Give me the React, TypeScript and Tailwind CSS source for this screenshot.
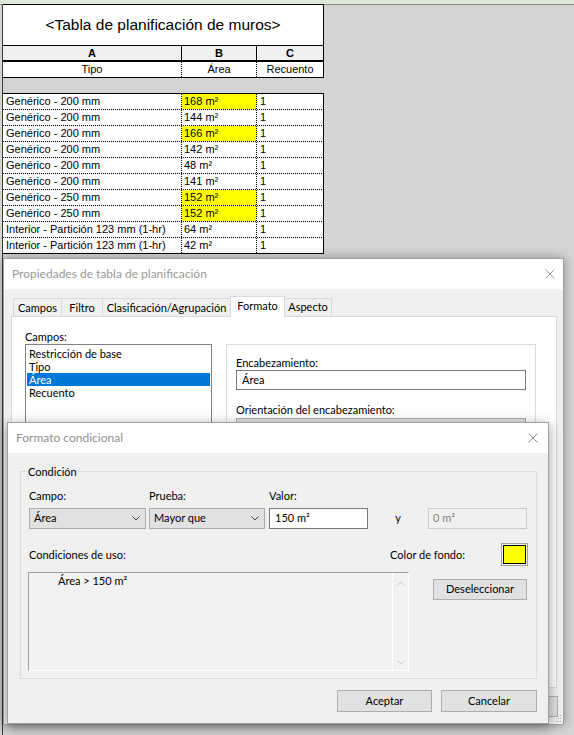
import React from "react";

const rows = [
  { tipo: "Genérico - 200 mm", area: "168 m²", hi: true },
  { tipo: "Genérico - 200 mm", area: "144 m²", hi: false },
  { tipo: "Genérico - 200 mm", area: "166 m²", hi: true },
  { tipo: "Genérico - 200 mm", area: "142 m²", hi: false },
  { tipo: "Genérico - 200 mm", area: "48 m²", hi: false },
  { tipo: "Genérico - 200 mm", area: "141 m²", hi: false },
  { tipo: "Genérico - 250 mm", area: "152 m²", hi: true },
  { tipo: "Genérico - 250 mm", area: "152 m²", hi: true },
  { tipo: "Interior - Partición 123 mm (1-hr)", area: "64 m²", hi: false },
  { tipo: "Interior - Partición 123 mm (1-hr)", area: "42 m²", hi: false },
];

function CloseX({ color }: { color: string }) {
  return (
    <svg width="10" height="10" viewBox="0 0 10 10" className="shrink-0">
      <path d="M0.5 0.5L9.5 9.5M9.5 0.5L0.5 9.5" stroke={color} strokeWidth="1" fill="none" />
    </svg>
  );
}

function Chevron({ color = "#404040", up = false }: { color?: string; up?: boolean }) {
  return (
    <svg width="8" height="5" viewBox="0 0 8 5" className="shrink-0">
      <path d={up ? "M0.5 4.5L4 1L7.5 4.5" : "M0.5 0.5L4 4L7.5 0.5"} stroke={color} strokeWidth="1" fill="none" />
    </svg>
  );
}

function Grip() {
  return (
    <svg width="7" height="10" viewBox="0 0 7 10">
      <rect x="5" y="2" width="1" height="1" fill="#a0a0a0" />
      <rect x="3" y="5" width="1" height="1" fill="#a0a0a0" />
      <rect x="5" y="5" width="1" height="1" fill="#a0a0a0" />
      <rect x="1" y="8" width="1" height="1" fill="#a0a0a0" />
      <rect x="3" y="8" width="1" height="1" fill="#a0a0a0" />
      <rect x="5" y="8" width="1" height="1" fill="#a0a0a0" />
    </svg>
  );
}

function ScheduleTable() {
  return (
    <div className="-mt-px flex w-[321px] flex-col font-['Liberation_Sans',Arial,sans-serif] text-[11px] text-black">
      <div className="flex h-[42px] items-center justify-center border-t border-r border-b border-black bg-white text-[15.5px]">
        &lt;Tabla de planificación de muros&gt;
      </div>
      <div className="flex h-[16px] border-b-2 border-black bg-[#f0f0f0] font-bold leading-[14px]">
        <div className="w-[179px] border-r border-black text-center">A</div>
        <div className="w-[75px] border-r border-black text-center">B</div>
        <div className="w-[67px] border-r border-black text-center">C</div>
      </div>
      <div className="flex h-[16px] border-b border-black bg-white leading-[15px]">
        <div className="w-[179px] border-r border-dotted border-black text-center">Tipo</div>
        <div className="w-[75px] border-r border-dotted border-black text-center">Área</div>
        <div className="w-[67px] border-r border-black text-center">Recuento</div>
      </div>
      <div className="h-[15px]" />
      <div className="flex flex-col border-t border-black bg-white leading-[15px]">
        {rows.map((r, i) => (
          <div
            key={i}
            className={`flex h-[16px] border-b border-black ${i === rows.length - 1 ? "" : "border-dotted"}`}
          >
            <div className="w-[179px] border-r border-dotted border-black pl-[3px] whitespace-nowrap">{r.tipo}</div>
            <div
              className={`w-[75px] border-r border-dotted border-black pl-[2px] ${r.hi ? "bg-[#ffff00]" : ""}`}
            >
              {r.area}
            </div>
            <div className="w-[67px] border-r border-black pl-[3px]">1</div>
          </div>
        ))}
      </div>
    </div>
  );
}

function PropertiesDialog() {
  const tabs = [
    { label: "Campos", w: "w-[48px]" },
    { label: "Filtro", w: "w-[41px]" },
    { label: "Clasificación/Agrupación", w: "w-[128px]" },
  ];
  return (
    <div className="absolute left-[3px] top-[258px] flex h-[467px] w-[561px] flex-col border border-[#a0a0a0] bg-[#f0f0f0] font-['Lato',sans-serif] text-[11px] text-black shadow-[0_0_10px_rgba(0,0,0,0.35)]">
      <div className="flex h-[30px] shrink-0 items-center bg-white pl-[8px] pr-[8px] text-[12px] text-[#999]">
        <span className="flex-1">Propiedades de tabla de planificación</span>
        <CloseX color="#9a9a9a" />
      </div>
      <div className="flex flex-1 flex-col pl-[7px] pr-[6px] pt-[7px]">
        <div className="flex h-[20px] items-end pl-[2px]">
          {tabs.map((t) => (
            <div
              key={t.label}
              className={`${t.w} flex h-[18px] items-center justify-center border-t border-l border-[#d9d9d9] bg-[#f0f0f0] leading-[15px]`}
            >
              {t.label}
            </div>
          ))}
          <div className="relative z-10 -mb-px flex h-[21px] w-[55px] items-center justify-center border-t border-l border-r border-[#d9d9d9] bg-white pb-[2px]">
            Formato
          </div>
          <div className="flex h-[18px] w-[47px] items-center justify-center border-t border-r border-[#d9d9d9] bg-[#f0f0f0]">
            Aspecto
          </div>
        </div>
        <div className="h-[372px] border border-[#d9d9d9] bg-white">
          <div className="flex pl-[13px] pt-[12px]">
            <div className="flex w-[187px] flex-col">
              <span className="leading-[15px]">Campos:</span>
              <div className="flex h-[260px] flex-col border border-[#828282] bg-white px-px pt-[2px] leading-[13px]">
                <div className="pl-[2px]">Restricción de base</div>
                <div className="pl-[2px]">Tipo</div>
                <div className="bg-[#0078d7] pl-[2px] text-white">Área</div>
                <div className="pl-[2px]">Recuento</div>
              </div>
            </div>
            <div className="ml-[14px] mt-[15px] flex h-[330px] w-[310px] flex-col border border-[#dcdcdc] px-[9px] pt-[10px]">
              <span className="leading-[15px]">Encabezamiento:</span>
              <div className="flex h-[20px] items-center border border-[#7a7a7a] bg-white pl-[5px]">Área</div>
              <span className="mt-[12px] leading-[15px]">Orientación del encabezamiento:</span>
              <div className="mt-px h-[21px] border border-[#adadad] bg-[#e1e1e1]" />
            </div>
          </div>
        </div>
        <div className="mt-[8px] flex justify-end gap-[9px]">
          <div className="flex h-[21px] w-[75px] items-center justify-center border border-[#adadad] bg-[#e1e1e1]">Aceptar</div>
          <div className="flex h-[21px] w-[75px] items-center justify-center border border-[#adadad] bg-[#e1e1e1]">Cancelar</div>
          <div className="-mr-px flex h-[21px] w-[75px] items-center justify-center border border-[#adadad] bg-[#e1e1e1]">Ayuda</div>
        </div>
      </div>
      <div className="absolute bottom-[1px] right-[1px]">
        <Grip />
      </div>
    </div>
  );
}

function Select({ value, w }: { value: string; w: string }) {
  return (
    <div className={`${w} flex h-[21px] items-center justify-between border border-[#adadad] bg-[#e1e1e1] pl-[4px] pr-[5px]`}>
      <span>{value}</span>
      <Chevron />
    </div>
  );
}

function ConditionalDialog() {
  return (
    <div className="absolute left-[7px] top-[422px] flex h-[302px] w-[542px] flex-col border border-[#a0a0a0] bg-[#f0f0f0] font-['Lato',sans-serif] text-[11px] text-black shadow-[0_3px_12px_rgba(0,0,0,0.4)]">
      <div className="flex h-[30px] shrink-0 items-center bg-white pl-[8px] pr-[10px] text-[12px] text-[#8f8f8f]">
        <span className="flex-1">Formato condicional</span>
        <CloseX color="#8a8a8a" />
      </div>
      <div className="flex flex-1 flex-col pl-[12px] pr-[11px] pt-[18px]">
        <div className="relative h-[208px] border border-[#dcdcdc] pb-[7px] pl-[8px] pr-[9px] pt-[16px]">
          <span className="absolute -top-[8px] left-[6px] bg-[#f0f0f0] px-px leading-[15px]">Condición</span>
          <div className="flex items-end">
            <div className="flex w-[117px] flex-col gap-[5px]">
              <span className="leading-[15px]">Campo:</span>
              <Select value="Área" w="w-[117px]" />
            </div>
            <div className="ml-[3px] flex w-[116px] flex-col gap-[5px]">
              <span className="leading-[15px]">Prueba:</span>
              <Select value="Mayor que" w="w-[116px]" />
            </div>
            <div className="ml-[4px] flex w-[99px] flex-col gap-[5px]">
              <span className="leading-[15px]">Valor:</span>
              <div className="flex h-[21px] items-center border border-[#7a7a7a] bg-white pl-[5px]">150 m²</div>
            </div>
            <div className="flex h-[21px] w-[60px] items-center justify-center">y</div>
            <div className="flex h-[21px] w-[99px] items-center border border-[#cccccc] bg-[#f0f0f0] pl-[4px] text-[#838383]">
              0 m²
            </div>
          </div>
          <div className="mt-[14px] flex h-[23px] items-center">
            <span className="flex-1 leading-[15px]">Condiciones de uso:</span>
            <span className="leading-[15px]">Color de fondo:</span>
            <div className="-mr-px ml-[36px] h-[23px] w-[27px] border border-[#a0a0a0] p-px">
              <div className="h-full w-full border border-black bg-[#ffff00]" />
            </div>
          </div>
          <div className="mt-[6px] flex items-start">
            <div className="-ml-px flex h-[99px] w-[381px] border-t border-l border-[#a0a0a0] border-r-white border-b-white border-r border-b bg-[#f2f2f2]">
              <div className="flex-1 pl-[29px] leading-[15px]">Área &gt; 150 m²</div>
              <div className="flex w-[16px] flex-col items-center justify-between border-l border-white pb-[5px] pt-[8px]">
                <Chevron color="#c8c8c8" up />
                <Chevron color="#c8c8c8" />
              </div>
            </div>
            <div className="ml-[24px] mt-[7px] flex h-[21px] w-[94px] items-center justify-center border border-[#adadad] bg-[#e1e1e1]">
              Deseleccionar
            </div>
          </div>
        </div>
        <div className="mt-[11px] flex justify-end gap-[9px]">
          <div className="flex h-[22px] w-[95px] items-center justify-center border border-[#adadad] bg-[#e1e1e1]">Aceptar</div>
          <div className="flex h-[22px] w-[96px] items-center justify-center border border-[#adadad] bg-[#e1e1e1]">Cancelar</div>
        </div>
      </div>
    </div>
  );
}

export default function App() {
  return (
    <div className="relative flex h-[735px] w-[574px] flex-col overflow-hidden bg-[#d4d4d4]">
      <div className="h-[4px] shrink-0 bg-[#e0e8d8]" />
      <div className="flex flex-1 border-t border-[#8b8b8b]">
        <div className="ml-[2px] w-px shrink-0 bg-[#3a3a3a]" />
        <ScheduleTable />
      </div>
      <PropertiesDialog />
      <ConditionalDialog />
    </div>
  );
}
